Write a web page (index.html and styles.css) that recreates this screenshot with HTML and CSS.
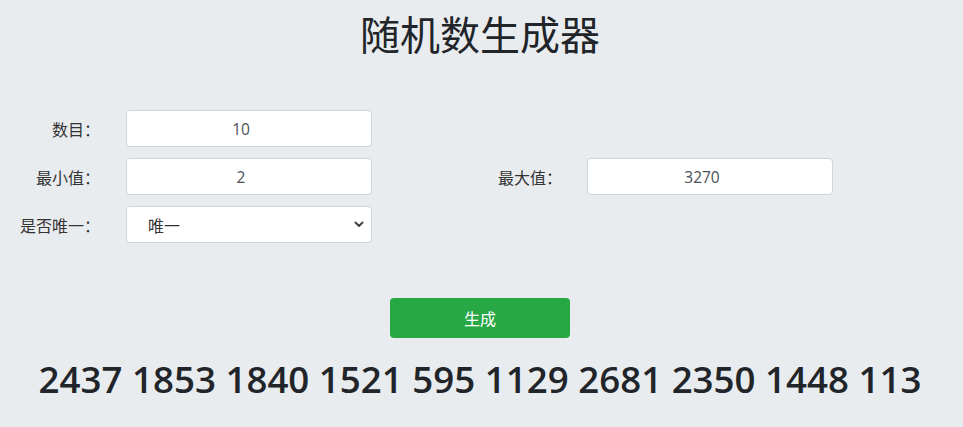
FILE: index.html
```html
<!DOCTYPE html>
<html lang="zh-CN">
<head>
<meta charset="utf-8">
<title>随机数生成器</title>
<link rel="stylesheet" href="styles.css">
</head>
<body>
<div class="page">
  <h1 class="title">随机数生成器</h1>
  <form class="form">
    <label class="label">数目：</label>
    <input class="field" type="text" value="10">
    <span class="spacer"></span>
    <span></span>
    <span></span>

    <label class="label">最小值：</label>
    <input class="field" type="text" value="2">
    <span class="spacer"></span>
    <label class="label label-left">最大值：</label>
    <input class="field" type="text" value="3270">

    <label class="label">是否唯一：</label>
    <div class="select-wrap">
      <select class="field select">
        <option>唯一</option>
        <option>不唯一</option>
      </select>
      <svg class="chevron" width="10" height="7" viewBox="0 0 10 7"><path d="M1.5 1.5 L5 5 L8.5 1.5" fill="none" stroke="#444" stroke-width="2" stroke-linecap="round" stroke-linejoin="round"/></svg>
    </div>
  </form>
  <div class="actions">
    <button class="btn" type="button">生成</button>
  </div>
  <div class="result">2437 1853 1840 1521 595 1129 2681 2350 1448 113</div>
</div>
</body>
</html>
```
FILE: styles.css
```css
html, body {
  margin: 0;
  padding: 0;
  background: #e9ecef;
}
body {
  font-family: "Open Sans", "Noto Sans CJK SC", sans-serif;
  color: #212529;
}
.page {
  width: 960px;
  padding-top: 9px;
}
.title {
  margin: 0;
  text-align: center;
  font-family: "Noto Sans CJK SC", sans-serif;
  font-weight: 400;
  font-size: 40px;
  line-height: 48px;
  color: #212529;
}
.form {
  margin-top: 53px;
  display: grid;
  grid-template-columns: 126px 246px 126px 89px 246px;
  grid-auto-rows: 37px;
  row-gap: 11px;
  align-items: center;
}
.label {
  font-family: "Noto Sans CJK SC", sans-serif;
  font-size: 16px;
  color: #333;
  text-align: right;
  padding-right: 26px;
}
.label-left {
  text-align: left;
  padding-right: 0;
}
.field {
  box-sizing: border-box;
  width: 246px;
  height: 37px;
  margin: 0;
  border: 1px solid #ced4da;
  border-radius: 4px;
  background: #fff;
  font-family: "Open Sans", "Noto Sans CJK SC", sans-serif;
  font-size: 15.5px;
  color: #495057;
  text-align: center;
  padding: 0 16px 0 0;
  outline: none;
}
.select-wrap {
  position: relative;
  width: 246px;
  height: 37px;
}
.select {
  appearance: none;
  -webkit-appearance: none;
  text-align: left;
  padding: 0 0 0 21px;
  font-family: "Noto Sans CJK SC", sans-serif;
  font-size: 16px;
  color: #333;
}
.chevron {
  position: absolute;
  right: 8px;
  top: 15px;
  pointer-events: none;
}
.actions {
  display: flex;
  justify-content: center;
  margin-top: 55px;
}
.btn {
  width: 180px;
  height: 40px;
  border: none;
  border-radius: 4px;
  background: #28a745;
  color: #fff;
  font-family: "Noto Sans CJK SC", sans-serif;
  font-size: 16px;
  padding: 0;
}
.result {
  margin-top: 19px;
  text-align: center;
  font-family: "Open Sans", sans-serif;
  font-weight: 600;
  font-size: 36.7px;
  line-height: 44px;
  color: #212529;
}
```
